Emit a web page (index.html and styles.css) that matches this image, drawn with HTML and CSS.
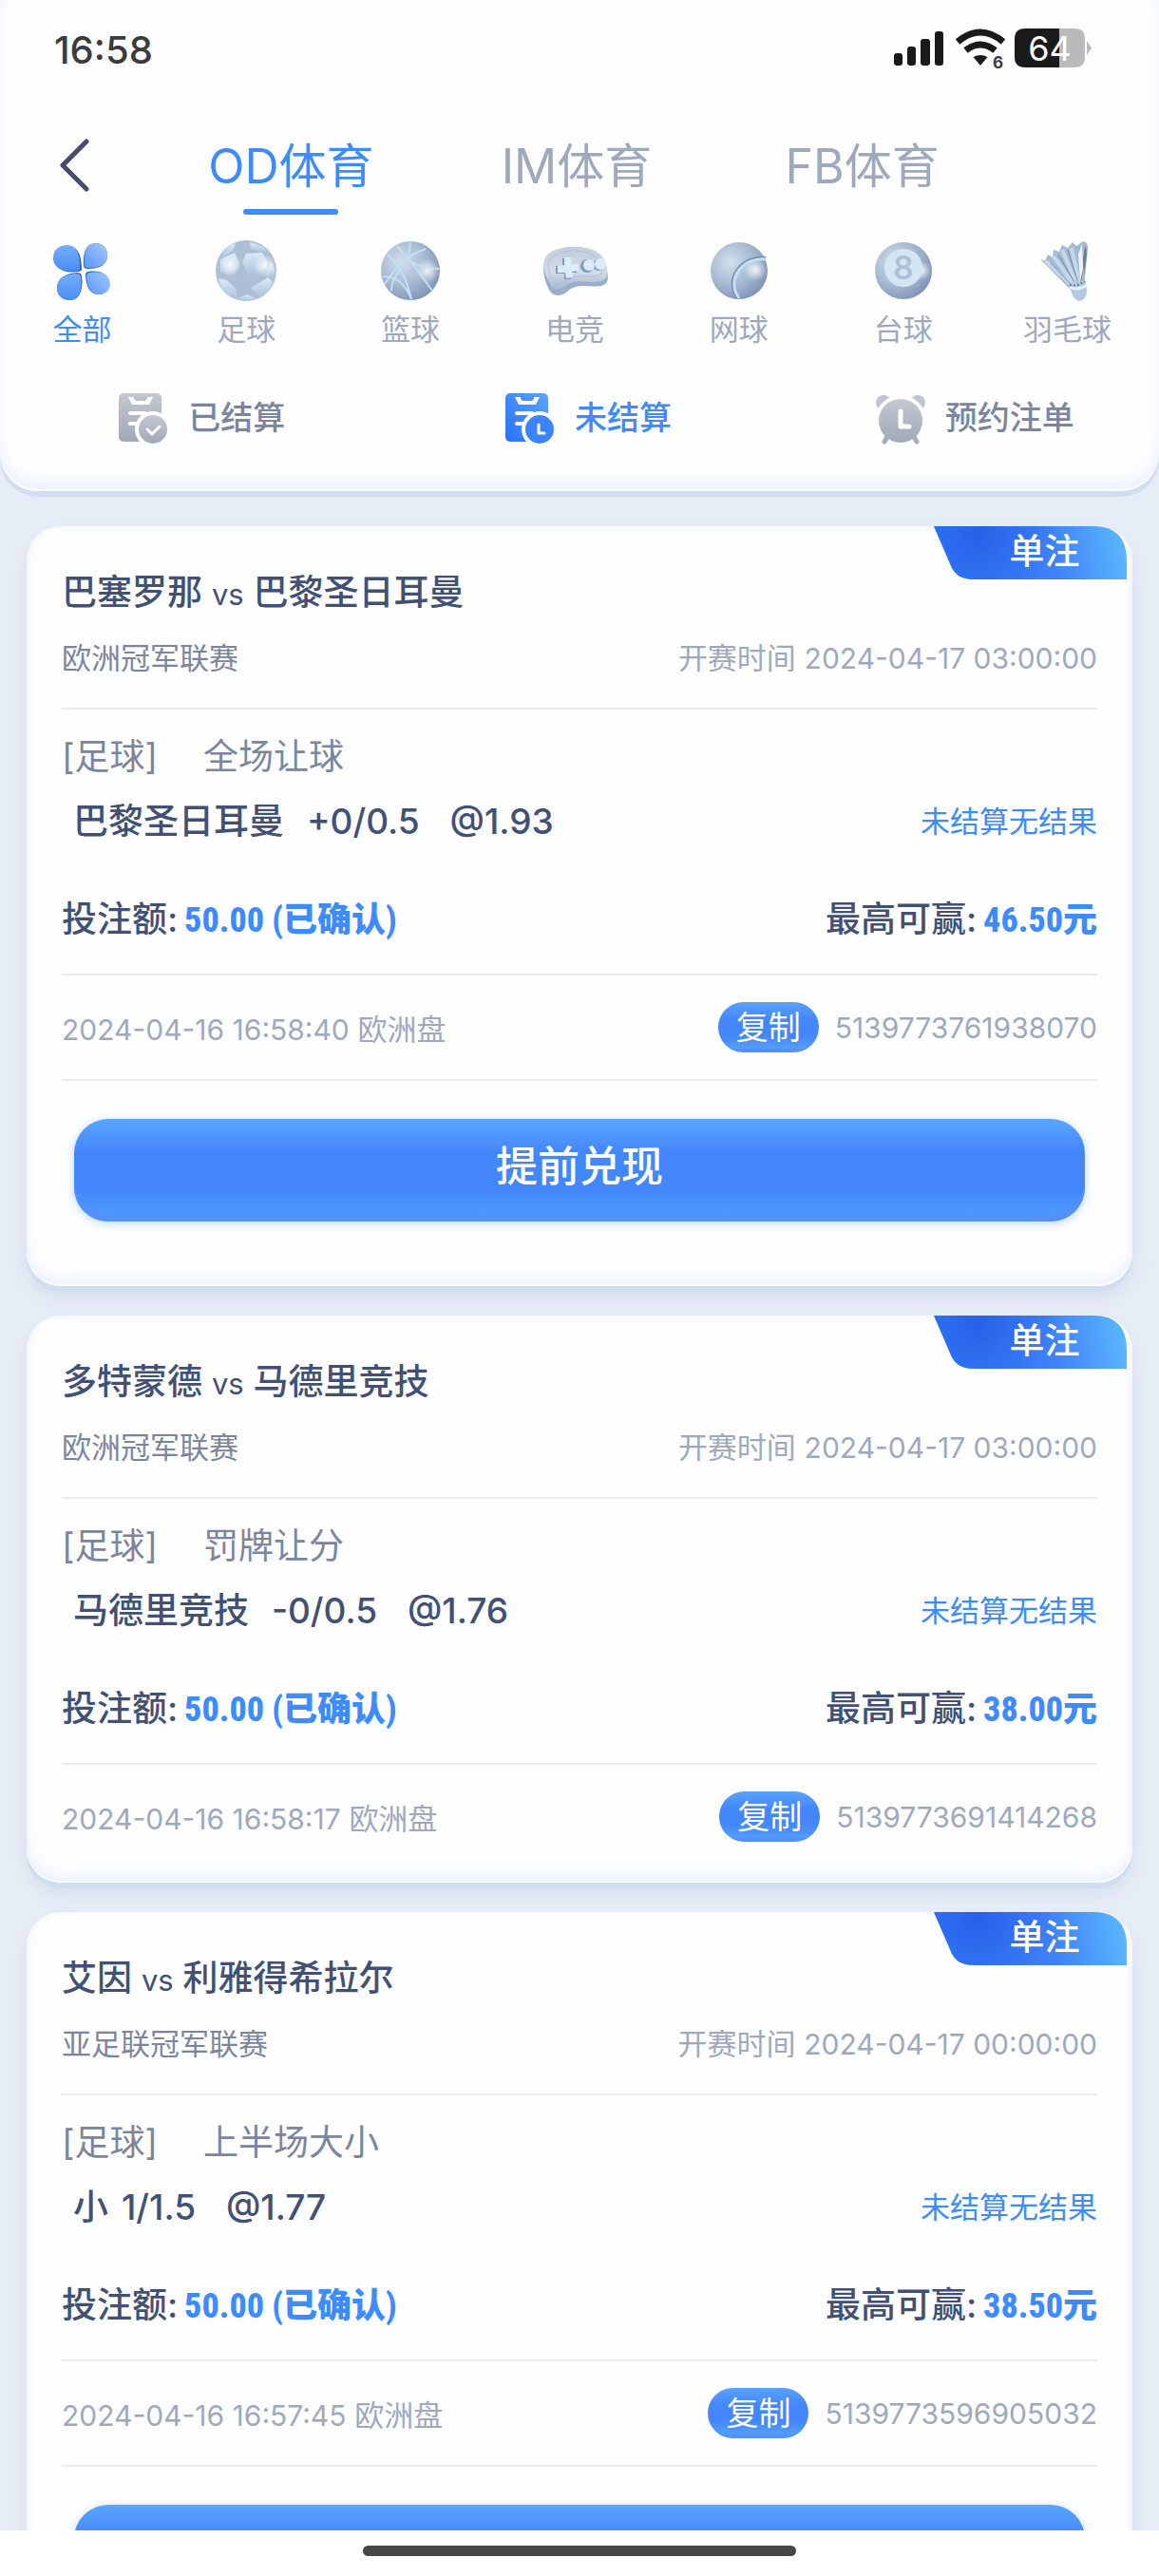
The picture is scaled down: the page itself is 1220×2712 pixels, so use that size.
FILE: index.html
```
<!DOCTYPE html>
<html lang="zh-CN">
<head>
    <meta charset="UTF-8">
    <meta name="viewport" content="width=device-width, initial-scale=1.0">
    <title>投注记录</title>
    <link rel="stylesheet" href="styles.css">
</head>
<body>
    <!-- Shared gradients -->
    <svg class="defs" aria-hidden="true">
        <defs>
            <radialGradient id="ball" cx="0.35" cy="0.35" r="0.75">
                <stop offset="0" stop-color="#d3dfec"/>
                <stop offset="0.5" stop-color="#a9bcd4"/>
                <stop offset="1" stop-color="#7a8fb3"/>
            </radialGradient>
            <radialGradient id="shine" cx="0.5" cy="0.5" r="0.5">
                <stop offset="0" stop-color="#fff" stop-opacity="0.85"/>
                <stop offset="1" stop-color="#fff" stop-opacity="0"/>
            </radialGradient>
            <linearGradient id="pale" x1="0" y1="0" x2="0" y2="1">
                <stop offset="0" stop-color="#dce9f5"/>
                <stop offset="1" stop-color="#a9c3de"/>
            </linearGradient>
            <linearGradient id="pad" x1="0" y1="0" x2="0" y2="1">
                <stop offset="0" stop-color="#c0cede"/>
                <stop offset="0.6" stop-color="#d3dae6"/>
                <stop offset="1" stop-color="#a5b9d2"/>
            </linearGradient>
            <linearGradient id="leafA" x1="0" y1="0" x2="0" y2="1">
                <stop offset="0" stop-color="#77adfa"/>
                <stop offset="1" stop-color="#4a8df8"/>
            </linearGradient>
            <linearGradient id="leafB" x1="1" y1="0" x2="0" y2="1">
                <stop offset="0" stop-color="#a6c8fd"/>
                <stop offset="1" stop-color="#5a97f9"/>
            </linearGradient>
            <linearGradient id="greyFill" x1="0" y1="0" x2="0" y2="1">
                <stop offset="0" stop-color="#c3c8d1"/>
                <stop offset="1" stop-color="#a1a8b7"/>
            </linearGradient>
            <linearGradient id="blueFill" x1="1" y1="0" x2="0" y2="1">
                <stop offset="0" stop-color="#5ba4fb"/>
                <stop offset="1" stop-color="#2a70fb"/>
            </linearGradient>
        </defs>
    </svg>

    <div class="app">
        <header class="header">
            <div class="status-bar">
                <span class="clock">16:58</span>
                <svg class="status-icons" viewBox="0 0 210 44">
                    <g fill="#1a1a1a">
                        <rect x="0" y="26" width="9" height="13" rx="3"/>
                        <rect x="14" y="19" width="9" height="20" rx="3"/>
                        <rect x="28" y="11" width="10" height="28" rx="3"/>
                        <rect x="43" y="3" width="9" height="36" rx="3"/>
                        <path d="M91 39L83.500 30Q91 26 98.500 30Z"/>
                    </g>
                    <path d="M67 14Q91 -6 115 14M75.500 23Q91 11 106.500 23" fill="none" stroke="#1a1a1a" stroke-width="7"/>
                    <circle cx="109" cy="36" r="8" fill="#fff"/>
                    <text x="104" y="42" font-size="17" font-weight="700" fill="#3c3c3c">6</text>
                    <path d="M138 0H174V41H138Q127 41 127 30V11Q127 0 138 0Z" fill="#1a1a1a"/>
                    <path d="M174 0H190Q201 0 201 11V30Q201 41 190 41H174Z" fill="#bababa"/>
                    <path d="M203 13L208 20.500L203 28Z" fill="#bababa"/>
                    <text x="164" y="34" font-size="36" text-anchor="middle" fill="#fff">64</text>
                </svg>
            </div>

            <nav class="tabs">
                <button class="back" aria-label="返回">
                    <svg width="36" height="56" viewBox="0 0 36 56"><path d="M29 3L4 28L29 53" fill="none" stroke="#484a6e" stroke-width="5" stroke-linecap="round" stroke-linejoin="round"/></svg>
                </button>
                <a href="#" class="tab active">OD体育</a>
                <a href="#" class="tab">IM体育</a>
                <a href="#" class="tab">FB体育</a>
            </nav>

            <nav class="sports">
                <a href="#" class="sport active">
                    <svg viewBox="0 0 64 64">
                        <g fill="#2f62b8" transform="translate(1 1)">
                            <path d="M17 5C26 5 31 13 31 30Q30 32 27 32C11 34 3 28 3 19C3 10 9 5 17 5Z"/>
                        </g>
                        <path d="M17 5C26 5 30 13 30 29Q30 32 27 32C11 34 2 28 2 19C2 10 8 5 17 5Z" fill="url(#leafA)"/>
                        <path d="M46 3C54 3 60 9 59 17C58 26 51 30 38 30Q34 30 34 26C33 12 38 3 46 3Z" fill="#2f62b8"/>
                        <path d="M46 3C54 3 60 9 59 17C58 26 51 29 38 29Q35 29 35 26C34 12 38 3 46 3Z" fill="url(#leafB)"/>
                        <path d="M27 34Q32 34 32 38C34 53 29 63 20 63C11 63 6 57 6 49C7 39 16 35 27 34Z" fill="#2f62b8"/>
                        <path d="M26 35Q31 35 31 39C33 54 28 63 20 63C11 63 5 57 6 49C7 39 16 36 26 35Z" fill="url(#leafA)"/>
                        <path d="M39 33C54 31 61 37 61 46C61 53 56 57 50 57C41 57 37 50 36 37Q36 33 39 33Z" fill="#2f62b8"/>
                        <path d="M41 34C54 32 62 37 62 46C62 53 56 57 50 57C42 57 38 50 37 38Q37 34 41 34Z" fill="url(#leafB)"/>
                    </svg>
                    <span>全部</span>
                </a>
                <a href="#" class="sport">
                    <svg viewBox="0 0 64 64">
                        <circle cx="32" cy="32" r="32" fill="#adbfd5"/>
                        <g fill="url(#pale)">
                            <path d="M32 14L49 13L55 23L48 34L34 37L28 23Z"/>
                            <path d="M5 20L20 13L25 25L19 38L5 34Z"/>
                            <path d="M36 2Q48 4 56 12L49 13L37 9Z"/>
                            <path d="M3 40L12 42L22 52V62Q6 57 3 40Z"/>
                            <path d="M37 50L55 39L60 44Q56 56 47 60Z"/>
                            <path d="M58 22Q64 30 62 40L53 38Z"/>
                            <path d="M23 61L33 57L43 61Q33 66 23 61Z"/>
                            <path d="M8 12Q14 5 21 3L18 11L7 18Z"/>
                        </g>
                        <circle cx="52" cy="27" r="12" fill="url(#shine)"/>
                        <circle cx="15" cy="26" r="12" fill="url(#shine)"/>
                    </svg>
                    <span>足球</span>
                </a>
                <a href="#" class="sport">
                    <svg viewBox="0 0 64 64">
                        <circle cx="32" cy="32" r="31" fill="url(#ball)"/>
                        <circle cx="50" cy="32" r="13" fill="url(#shine)"/>
                        <path d="M18 6Q36 26 55 53M5 46Q22 18 48 9M3 38Q24 38 33 62M31 21Q42 30 62 30M8 15Q26 30 33 62M32 2Q30 12 31 21M12 53Q12 42 20 33" fill="none" stroke="#c3e0f2" stroke-width="2"/>
                    </svg>
                    <span>篮球</span>
                </a>
                <a href="#" class="sport">
                    <svg class="wide" viewBox="0 0 72 64">
                        <path d="M3 29C3 15 17 7 35 7C54 7 66 14 69 27C72 40 72 46 64 48C50 50 39 44 28 54C21 60 12 59 9 52C5 44 3 37 3 29Z" fill="#98aecb"/>
                        <path d="M3 25C4 13 17 7 35 7C54 7 66 13 69 25C71 37 71 41 63 43C49 46 38 39 26 48C19 53 13 53 10 46C6 38 3 32 3 25Z" fill="url(#pad)"/>
                        <path d="M8 26C9 17 20 11 35 11C52 11 61 17 64 27C66 36 63 38 57 38C46 38 35 36 25 43C18 47 14 46 12 41C9 35 8 30 8 26Z" fill="none" stroke="#b0c0d5" stroke-width="1"/>
                        <g fill="#7f9bbc">
                            <path d="M23 19H31V26H38V34H32V41H25V35H16V27H23Z"/>
                            <circle cx="49" cy="27" r="7"/><circle cx="61" cy="26" r="6"/>
                        </g>
                        <g fill="#dcecf7">
                            <path d="M25 18H32L33 25L40 25V32L33 33L34 39L27 40L26 34L18 34V27L25 26Z"/>
                            <circle cx="51" cy="26" r="6"/><circle cx="63" cy="25" r="6"/>
                        </g>
                    </svg>
                    <span>电竞</span>
                </a>
                <a href="#" class="sport">
                    <svg viewBox="0 0 64 64">
                        <circle cx="32" cy="32" r="30" fill="url(#ball)"/>
                        <circle cx="49" cy="31" r="12" fill="url(#shine)"/>
                        <path d="M60 19C36 16 16 40 31 61" fill="none" stroke="#728aad" stroke-width="4"/>
                        <path d="M60 20C37 17 17 40 32 61" fill="none" stroke="#c3e1f3" stroke-width="3"/>
                    </svg>
                    <span>网球</span>
                </a>
                <a href="#" class="sport">
                    <svg viewBox="0 0 64 64">
                        <circle cx="32" cy="32" r="30" fill="url(#ball)"/>
                        <circle cx="51" cy="32" r="10" fill="url(#shine)"/>
                        <circle cx="32" cy="29" r="20" fill="#d5e6f3"/>
                        <text x="32" y="41" font-size="34" font-weight="600" text-anchor="middle" fill="#afc0d6">8</text>
                    </svg>
                    <span>台球</span>
                </a>
                <a href="#" class="sport">
                    <svg viewBox="0 0 64 64">
                        <path d="M3 19L8 22L11 15L16 18L17 10L23 12L26 5L32 8L37 2L41 6L48 1Q54 2 53 10L49 48L34 51L6 23Z" fill="#a4bbd3"/>
                        <path d="M9 22L36 47M17 17L38 46M26 10L41 46M36 8L44 46" fill="none" stroke="#c5d8ea" stroke-width="4"/>
                        <path d="M14 24L37 48M22 15L40 46M32 10L43 45M50 8L46 44" fill="none" stroke="#6f8aa9" stroke-width="1"/>
                        <path d="M43 15L47 4L48 30L45 43Z" fill="#eef1f5"/>
                        <path d="M51 5L52 15L49 37L48 20Z" fill="#687d99"/>
                        <path d="M33 47Q42 40 51 44L52 52Q52 63 44 64Q40 63 37 58Z" fill="#b3cbe2"/>
                        <path d="M34 49Q42 54 52 47" fill="none" stroke="#e6f2fa" stroke-width="3"/>
                        <path d="M34 47Q42 49 50 43" fill="none" stroke="#5d7998" stroke-width="2" stroke-dasharray="2 2"/>
                    </svg>
                    <span>羽毛球</span>
                </a>
            </nav>

            <nav class="filters">
                <a href="#" class="filter">
                    <svg viewBox="0 0 54 56">
                        <rect x="1" y="2" width="45" height="51" rx="5" fill="url(#greyFill)"/>
                        <path d="M11 6H37L33 14H15Z" fill="#fff"/><path d="M17 6H31V8L29 10H19L17 8Z" fill="#b9bfca"/>
                        <path d="M13 23H29M13 34H21" stroke="#fff" stroke-width="4" stroke-linecap="round"/>
                        <circle cx="37" cy="40" r="19" fill="#fff"/>
                        <circle cx="37" cy="40" r="15" fill="url(#greyFill)"/>
                        <path d="M31 40L36 45L44 37" fill="none" stroke="#fff" stroke-width="3" stroke-linecap="round" stroke-linejoin="round"/>
                    </svg>
                    <span>已结算</span>
                </a>
                <a href="#" class="filter active">
                    <svg viewBox="0 0 54 56">
                        <rect x="1" y="2" width="45" height="51" rx="5" fill="url(#blueFill)"/>
                        <path d="M11 6H37L33 14H15Z" fill="#fff"/><path d="M17 6H31V8L29 10H19L17 8Z" fill="#4a93fb"/>
                        <path d="M13 23H29M13 34H21" stroke="#fff" stroke-width="4" stroke-linecap="round"/>
                        <circle cx="37" cy="40" r="19" fill="#fff"/>
                        <circle cx="37" cy="40" r="15" fill="#3b84fb"/>
                        <path d="M36 35V44H42" fill="none" stroke="#fff" stroke-width="3" stroke-linecap="round" stroke-linejoin="round"/>
                    </svg>
                    <span>未结算</span>
                </a>
                <a href="#" class="filter">
                    <svg viewBox="0 0 54 56">
                        <circle cx="9" cy="12" r="8" fill="#bfc4ce"/><circle cx="45" cy="12" r="8" fill="#bfc4ce"/>
                        <circle cx="27" cy="31" r="27" fill="#fff"/>
                        <path d="M13 48L10 53M41 48L44 53" stroke="#a5acba" stroke-width="5" stroke-linecap="round"/>
                        <circle cx="27" cy="31" r="23" fill="url(#greyFill)"/>
                        <path d="M27 21V37H36" fill="none" stroke="#fff" stroke-width="5" stroke-linecap="round" stroke-linejoin="round"/>
                    </svg>
                    <span>预约注单</span>
                </a>
            </nav>
        </header>

        <main class="bets">
            <article class="card">
                <span class="ribbon">单注</span>
                <h2 class="match">巴塞罗那 <small>vs</small> 巴黎圣日耳曼</h2>
                <div class="row league">
                    <span>欧洲冠军联赛</span>
                    <span class="muted">开赛时间 <span class="num">2024-04-17 03:00:00</span></span>
                </div>
                <div class="market"><span>[足球]</span><span>全场让球</span></div>
                <div class="row pick">
                    <span class="selection">巴黎圣日耳曼 <span class="odds">+0/0.5</span> <span class="odds price">@1.93</span></span>
                    <span class="result">未结算无结果</span>
                </div>
                <div class="row stake">
                    <span>投注额: <strong>50.00 (已确认)</strong></span>
                    <span>最高可赢: <strong>46.50元</strong></span>
                </div>
                <div class="row meta">
                    <span><span class="num">2024-04-16 16:58:40</span> 欧洲盘</span>
                    <span class="order"><button class="copy">复制</button><span class="num">5139773761938070</span></span>
                </div>
                <div class="cashout">
                    <button class="cashout-btn">提前兑现</button>
                </div>
            </article>

            <article class="card">
                <span class="ribbon">单注</span>
                <h2 class="match">多特蒙德 <small>vs</small> 马德里竞技</h2>
                <div class="row league">
                    <span>欧洲冠军联赛</span>
                    <span class="muted">开赛时间 <span class="num">2024-04-17 03:00:00</span></span>
                </div>
                <div class="market"><span>[足球]</span><span>罚牌让分</span></div>
                <div class="row pick">
                    <span class="selection">马德里竞技 <span class="odds">-0/0.5</span> <span class="odds price">@1.76</span></span>
                    <span class="result">未结算无结果</span>
                </div>
                <div class="row stake">
                    <span>投注额: <strong>50.00 (已确认)</strong></span>
                    <span>最高可赢: <strong>38.00元</strong></span>
                </div>
                <div class="row meta">
                    <span><span class="num">2024-04-16 16:58:17</span> 欧洲盘</span>
                    <span class="order"><button class="copy">复制</button><span class="num">5139773691414268</span></span>
                </div>
            </article>

            <article class="card">
                <span class="ribbon">单注</span>
                <h2 class="match">艾因 <small>vs</small> 利雅得希拉尔</h2>
                <div class="row league">
                    <span>亚足联冠军联赛</span>
                    <span class="muted">开赛时间 <span class="num">2024-04-17 00:00:00</span></span>
                </div>
                <div class="market"><span>[足球]</span><span>上半场大小</span></div>
                <div class="row pick">
                    <span class="selection">小<span class="odds">1/1.5</span> <span class="odds price">@1.77</span></span>
                    <span class="result">未结算无结果</span>
                </div>
                <div class="row stake">
                    <span>投注额: <strong>50.00 (已确认)</strong></span>
                    <span>最高可赢: <strong>38.50元</strong></span>
                </div>
                <div class="row meta">
                    <span><span class="num">2024-04-16 16:57:45</span> 欧洲盘</span>
                    <span class="order"><button class="copy">复制</button><span class="num">5139773596905032</span></span>
                </div>
                <div class="cashout">
                    <button class="cashout-btn">提前兑现</button>
                </div>
            </article>
        </main>

        <footer class="home-bar"><div class="handle"></div></footer>
    </div>
</body>
</html>
```
FILE: styles.css
```
* {
    box-sizing: border-box;
}

body {
    margin: 0;
    background: #e6edf6;
    color: #425173;
    font-family: Inter, "Noto Sans CJK SC", sans-serif;
    font-size: 31px;
}

a {
    color: inherit;
    text-decoration: none;
}

button {
    padding: 0;
    border: none;
    font-family: inherit;
    cursor: pointer;
}

.defs {
    position: absolute;
    width: 0;
    height: 0;
}

.app {
    display: flex;
    flex-direction: column;
    height: 100vh;
}

/* Header */
.header {
    position: relative;
    z-index: 1;
    flex: none;
    padding-bottom: 49px;
    background: #fefeff;
    border-radius: 0 0 40px 40px;
    box-shadow: inset 0 -2px 0 #fbfdff, inset 0 -10px 20px -4px #e4edfb, 0 6px 0 #cfdff1;
}

.status-bar {
    display: flex;
    justify-content: space-between;
    align-items: center;
    height: 104px;
    padding: 0 69px 0 57px;
}

.clock {
    color: #3c3c3c;
    font-size: 40px;
    font-weight: 500;
}

.status-icons {
    width: 210px;
    height: 44px;
    overflow: visible;
}

.tabs {
    display: grid;
    grid-template-columns: 156px 1fr 1fr 1fr;
    padding-right: 162px;
    height: 149px;
}

.back {
    display: flex;
    align-items: center;
    height: 60px;
    margin: 40px 0 0 62px;
    background: none;
}

.tab {
    display: flex;
    flex-direction: column;
    align-items: center;
    padding-top: 41px;
    color: #9fa9bd;
    font-size: 50px;
    line-height: 60px;
}

.tab.active {
    color: #3d8bfd;
}

.tab.active::after {
    content: "";
    width: 100px;
    height: 6px;
    margin-top: 15px;
    border-radius: 3px;
    background: #3d8bfd;
}

.sports {
    display: grid;
    grid-template-columns: repeat(7, 1fr);
    padding-right: 10px;
}

.sport {
    display: flex;
    flex-direction: column;
    align-items: center;
    gap: 10px;
    color: #9fa9bd;
    line-height: 40px;
}

.sport svg {
    width: 64px;
    height: 64px;
}

.sport svg.wide {
    width: 72px;
}

.sport.active {
    color: #3d8bfd;
}

.filters {
    display: grid;
    grid-template-columns: repeat(3, 1fr);
    margin-top: 45px;
}

.filter {
    display: flex;
    align-items: center;
    justify-content: center;
    gap: 20px;
    color: #7b869e;
    font-size: 34px;
    font-weight: 500;
    line-height: 56px;
}

.filter svg {
    width: 54px;
    height: 56px;
    margin-left: 18px;
}

.filter.active {
    color: #3d8bfd;
}

/* Bet list */
.bets {
    flex: 1;
    min-height: 0;
    display: flex;
    flex-direction: column;
    gap: 31px;
    padding: 37px 28px;
    overflow-y: auto;
    scrollbar-width: none;
}

.card {
    position: relative;
    flex: none;
    padding: 42px 37px 15px;
    background: #fefeff;
    border-radius: 36px;
    box-shadow: inset 0 -2px 0 #fbfdff, inset 0 -10px 20px -6px #e4edfb, inset 0 0 8px #f0f6fd,
        0 6px 0 #cfdff1, 0 12px 18px rgba(190, 202, 225, 0.4);
}

.ribbon {
    position: absolute;
    top: 0;
    right: 6px;
    width: 203px;
    height: 56px;
    padding-left: 30px;
    clip-path: path("M0 0H168Q203 0 203 36V56H42Q25 56 19 44Z");
    background: radial-gradient(circle at 46px 8px, #2a5fe8 0, rgba(42, 95, 232, 0) 80px),
        linear-gradient(80deg, #2a7bfa 0%, #3f80f6 60%, #5cbaff 100%);
    color: #fff;
    font-size: 37px;
    font-weight: 500;
    line-height: 54px;
    text-align: center;
}

.match {
    margin: 0;
    font-size: 37px;
    font-weight: 500;
    line-height: 56px;
}

.match small {
    font-size: 31px;
    font-weight: 400;
    line-height: 1;
}

.row {
    display: flex;
    justify-content: space-between;
    align-items: center;
}

.league {
    padding: 17px 0 28px;
    border-bottom: 2px solid #ececee;
    color: #7b869e;
    line-height: 48px;
}

.muted {
    color: #9fa9bd;
}

.num {
    font-size: 30px;
    line-height: 1;
}

.market {
    display: flex;
    gap: 48px;
    margin-top: 26px;
    color: #7b869e;
    font-size: 37px;
    line-height: 48px;
}

.pick {
    margin-top: 20px;
    padding-left: 12px;
    line-height: 48px;
}

.selection {
    font-size: 37px;
    font-weight: 500;
}

.odds {
    margin-left: 14px;
    font-size: 37px;
    line-height: 1;
}

.price {
    margin-left: 22px;
}

.result {
    color: #3d8bfd;
}

.stake {
    padding: 55px 0 33px;
    border-bottom: 2px solid #ececee;
    font-size: 37px;
    font-weight: 500;
    line-height: 48px;
}

.stake strong {
    margin-left: -3px;
    color: #3d8bfd;
    font-family: "Roboto Condensed", "Noto Sans CJK SC", sans-serif;
    font-size: 36px;
    font-weight: 800;
    line-height: 1;
}

.meta {
    height: 109px;
    color: #9fa9bd;
}

.order {
    display: flex;
    align-items: center;
    gap: 17px;
}

.copy {
    width: 106px;
    height: 53px;
    border-radius: 27px;
    background: linear-gradient(#58a2ff 0%, #4486fb 35%, #4486fb 65%, #529dfd 92%, #5590f8 93%);
    color: #fff;
    font-size: 34px;
    line-height: 50px;
}

.cashout {
    padding: 40px 13px 53px;
    border-top: 2px solid #ececee;
}

.cashout-btn {
    display: block;
    width: 100%;
    height: 108px;
    padding-bottom: 8px;
    border-radius: 36px;
    background: linear-gradient(#5aa6ff 0%, #4486fb 32%, #4486fb 68%, #4d9cfc 100%);
    box-shadow: inset 0 -7px 0 #5590f8, 0 2px 10px rgba(110, 175, 255, 0.5);
    color: #fff;
    font-size: 44px;
    font-weight: 500;
    line-height: 60px;
}

/* Home indicator */
.home-bar {
    position: relative;
    z-index: 1;
    flex: none;
    display: flex;
    justify-content: center;
    height: 48px;
    padding-top: 16px;
    background: #fff;
}

.handle {
    width: 456px;
    height: 11px;
    border-radius: 6px;
    background: #464646;
}
```
